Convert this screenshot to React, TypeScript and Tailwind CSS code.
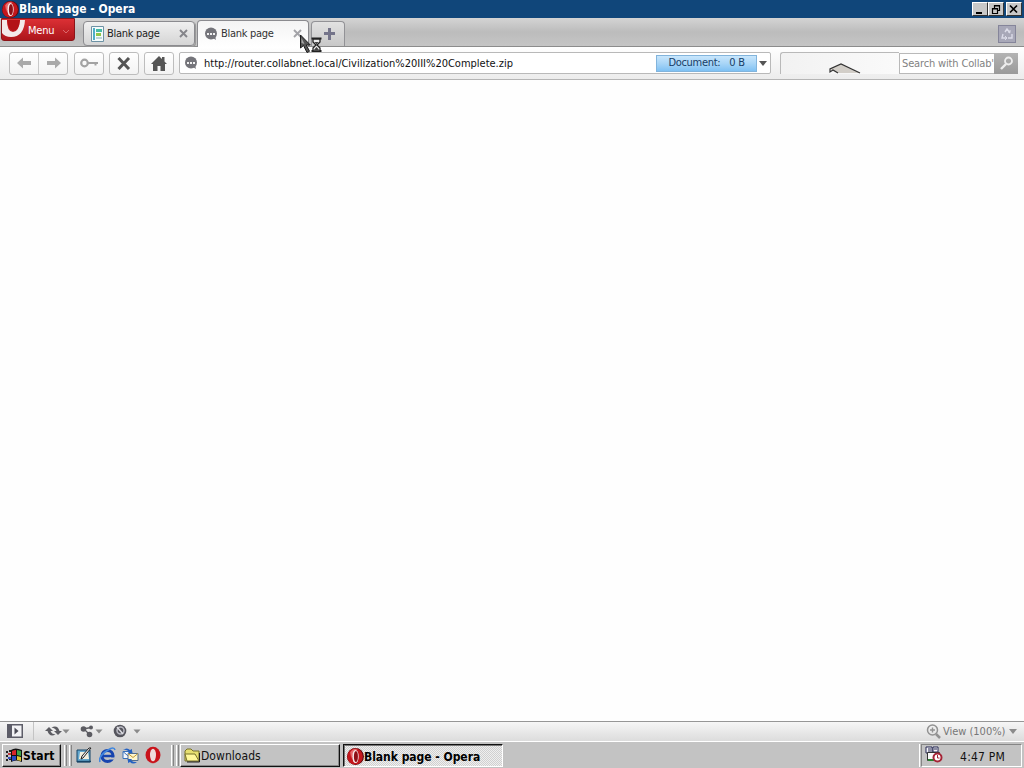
import type { ReactNode } from 'react';

function OperaLogo({ size = 16 }: { size?: number }) {
  return (
    <svg width={size} height={size} viewBox="0 0 16 16" className="shrink-0">
      <ellipse cx="8" cy="8" rx="8" ry="8" fill="#5c0b10" />
      <ellipse cx="7.6" cy="8" rx="7.3" ry="7.6" fill="#c4161c" />
      <path d="M3 4Q6 0 10 1Q5 3 4 10Z" fill="#e8686a" />
      <ellipse cx="8" cy="8" rx="3" ry="6.2" fill="#f6e8e8" />
      <ellipse cx="8.4" cy="8" rx="1.9" ry="5.2" fill="#8e0f16" />
    </svg>
  );
}

function BubbleIcon() {
  return (
    <svg width="14" height="14" viewBox="0 0 14 14" className="shrink-0">
      <circle cx="7" cy="6.6" r="6" fill="#74747a" />
      <path d="M9 11l3 2l-1-4z" fill="#74747a" />
      <path d="M3 6h2v2H3zM6 6h2v2H6zM9 6h2v2H9z" fill="#f2f2f2" />
    </svg>
  );
}

function CloseX({ color }: { color: string }) {
  return (
    <svg width="9" height="9" viewBox="0 0 9 9" className="shrink-0">
      <path d="M1 1l7 7M8 1l-7 7" stroke={color} strokeWidth="1.9" />
    </svg>
  );
}

function Caret({ color = '#77777b' }: { color?: string }) {
  return (
    <svg width="8" height="5" viewBox="0 0 8 5" className="shrink-0">
      <path d="M0 0h8L4 5z" fill={color} />
    </svg>
  );
}

function SmallCaret() {
  return (
    <svg width="8" height="5" viewBox="0 0 8 5" className="shrink-0">
      <path d="M.5 .5h7L4 4.500z" fill="#8a8a8a" />
    </svg>
  );
}

function WindowButton({ children }: { children: ReactNode }) {
  return (
    <button className="flex h-[14px] w-4 items-center justify-center border border-t-white border-r-[#333] border-b-[#333] border-l-white bg-[#c8c8c8]">
      {children}
    </button>
  );
}

function TitleBar() {
  return (
    <div className="flex h-[18px] items-center bg-[#10467a] pr-0.5 pl-0.5">
      <OperaLogo size={17} />
      <span className="flex-1 pt-px text-[12px] leading-[17px] font-bold tracking-[-0.03px] text-white">
        Blank page - Opera
      </span>
      <WindowButton>
        <svg width="12" height="10" viewBox="0 0 12 10">
          <path d="M2 8h6v2H2z" fill="#000" />
        </svg>
      </WindowButton>
      <WindowButton>
        <svg width="12" height="11" viewBox="0 0 12 11">
          <path d="M4.5 4V1.5h5v5H8M4 2h6M2.5 4.5h5v5h-5zM2 5h6" fill="none" stroke="#000" strokeWidth="1.2" />
        </svg>
      </WindowButton>
      <div className="w-0.5" />
      <WindowButton>
        <svg width="12" height="10" viewBox="0 0 12 10">
          <path d="M2 1.5l7 7M9 1.5l-7 7" stroke="#000" strokeWidth="1.7" />
        </svg>
      </WindowButton>
    </div>
  );
}

function TabBar() {
  return (
    <div className="relative flex h-[29px] items-start border-b border-[#8c8c8c] bg-linear-to-b from-[#d4d4d4] via-[#bcbcbc] to-[#c5c5c5]">
      <button className="ml-px flex h-[23px] w-[74px] items-start rounded-b-[3px] border border-[#8b1519] bg-linear-to-b from-[#dc3035] to-[#ad161b] pt-px text-[11px] text-white">
        <svg width="26" height="19" viewBox="0 0 26 19" className="shrink-0">
          <path d="M0 0H5Q5 12 11 12Q17 12 18 0H23Q22 17 9 17Q3 17 0 13Z" fill="#f3eaea" />
          <path d="M5 0h13Q17 11 11 11Q6 10 5 0Z" fill="#b31217" />
        </svg>
        <span className="mt-1 w-[34px] text-left leading-[14px] tracking-[-0.2px]">Menu</span>
        <svg width="8" height="5" viewBox="0 0 8 5" className="mt-[9px]">
          <path d="M1 1l3 3l3-3" fill="none" stroke="#d9686b" />
        </svg>
      </button>

      <div className="mt-[3px] ml-2 flex h-[25px] w-[112px] items-center rounded-[4px] border border-[#8b8b8f] bg-linear-to-b from-[#f0f0f0] to-[#d5d5d5] pr-1.5 pl-[7px] shadow-[1px_1px_0_#999]">
        <svg width="13" height="16" viewBox="0 0 13 16" className="shrink-0">
          <path d="M.5.5h12v15H.5z" fill="#f4fbfb" stroke="#6d92a5" />
          <path d="M2 2h2v12H2z" fill="#4daec8" />
          <path d="M5 3h6v3H5z" fill="#45bba7" />
          <path d="M5 7h5v3H5z" fill="#8fc64a" />
          <path d="M5 12h6" stroke="#82aebb" />
        </svg>
        <span className="ml-[3px] flex-1 pt-0.5 text-[11px] tracking-[-0.3px] text-[#222]">Blank page</span>
        <CloseX color="#85858a" />
      </div>

      <div className="mt-0.5 ml-0.5 flex h-[27px] w-[112px] items-center rounded-t-[4px] border border-b-0 border-[#8b8b8f] bg-linear-to-b from-[#f4f4f4] to-white pr-1.5 pb-px pl-1.5">
        <BubbleIcon />
        <span className="ml-[3px] flex-1 pt-0.5 text-[11px] tracking-[-0.3px] text-[#333]">Blank page</span>
        <CloseX color="#a3a3a8" />
      </div>

      <button className="mt-[3px] ml-0.5 flex h-[25px] w-[34px] items-center justify-center rounded-t-[4px] border border-b-0 border-[#929296] bg-linear-to-b from-[#e2e2e2] to-[#c8c8c8] pl-0.5">
        <svg width="13" height="13" viewBox="0 0 13 13">
          <path d="M5 0h3v4h4v3H8v5H5V7H1V4h4z" fill="#74748a" />
        </svg>
      </button>

      <div className="mt-[7px] mr-2 ml-auto flex size-[18px] items-center justify-center border border-[#85859a] bg-[#a8a8b8]">
        <svg width="14" height="14" viewBox="0 0 14 14" fill="none" stroke="#dcdce8">
          <path d="M5 5l2-3l3 4M3 7l-1 4h4M12 7v4H8" strokeWidth="1.4" />
          <path d="M8 5h2V3M5 9l2 2l-2 2" />
        </svg>
      </div>

      {/* Busy pointer, hovering over the close button */}
      <svg width="26" height="22" viewBox="0 0 26 22" className="absolute top-4 left-[299px] z-10">
        <path d="M1.5 1v13l3-2.5l3.5 7l2.5-1.2L7.3 11h4z" fill="#555" stroke="#1c1c1c" />
        <path d="M2.5 4v5l3 1z" fill="#aaa" />
        <path d="M12.5 4.500h10M12.500 17h10" stroke="#222" strokeWidth="2" />
        <path d="M14 5v3l3 3l-3 3v3h7v-3l-3-3l3-3V5z" fill="#eee" stroke="#222" strokeWidth="1.300" />
        <path d="M15.500 8h4l-2 2.500zM14.500 16.500l3-3.500l3 3.500z" fill="#444" />
      </svg>
    </div>
  );
}

function ToolButton({ children }: { children: ReactNode }) {
  return (
    <button className="flex h-[23px] w-[30px] items-center justify-center rounded-[3px] border border-[#bdbdbd] bg-linear-to-b from-white to-[#f3f3f3]">
      {children}
    </button>
  );
}

function AddressBar() {
  return (
    <div className="flex h-[33px] items-center border-b border-[#b5b5b5] bg-linear-to-b from-white to-[#ececec] pr-1.5 pl-[9px]">
      <div className="flex h-[23px] w-[59px] rounded-[3px] border border-[#bdbdbd] bg-linear-to-b from-white to-[#f3f3f3]">
        <button className="flex flex-1 items-center justify-center border-r border-[#c8c8c8]">
          <svg width="15" height="12" viewBox="0 0 15 12">
            <path d="M0 6l6-5.500v3.500h8v4H6v3.500z" fill="#aaa" />
          </svg>
        </button>
        <button className="flex flex-1 items-center justify-center">
          <svg width="15" height="12" viewBox="0 0 15 12">
            <path d="M15 6L9 .5v3.500H1v4h8v3.500z" fill="#aaa" />
          </svg>
        </button>
      </div>
      <div className="ml-1.5 flex gap-[5px]">
        <ToolButton>
          <svg width="18" height="10" viewBox="0 0 18 10" fill="none" stroke="#a3a3a3">
            <circle cx="4.5" cy="5" r="3.3" strokeWidth="2.2" />
            <path d="M8 5h10M15.5 5v2.5" strokeWidth="2" />
          </svg>
        </ToolButton>
        <ToolButton>
          <svg width="14" height="13" viewBox="0 0 14 13">
            <path d="M1.500 1l10.500 11M12 1l-10.500 11" stroke="#555" strokeWidth="3" />
          </svg>
        </ToolButton>
        <ToolButton>
          <svg width="16" height="15" viewBox="0 0 16 15">
            <path d="M8 0l3 3V1h2.5v4.5L16 8H14v7H9.5v-5h-3v5H2V8H0z" fill="#555" />
          </svg>
        </ToolButton>
      </div>

      <div className="ml-[5px] flex h-[22px] w-[592px] items-center rounded-[2px] border border-[#b9b9b9] bg-white pl-1">
        <BubbleIcon />
        <span className="ml-1.5 flex-1 pt-0.5 text-[11px] tracking-[-0.01px] whitespace-nowrap text-[#111]">
          http://router.collabnet.local/Civilization%20III%20Complete.zip
        </span>
        <div className="flex h-[17px] w-[101px] items-center justify-center gap-[9px] border border-[#82b4dc] bg-linear-to-b from-[#c8e6fc] via-[#a8d5f7] to-[#7fc1f3] pt-px text-[11px] tracking-[-0.3px] text-[#173d66]">
          <span>Document:</span>
          <span>0 B</span>
        </div>
        <div className="mr-[3px] ml-0.5">
          <Caret color="#555" />
        </div>
      </div>

      <div className="ml-[9px] flex h-[22px] w-[119px] items-end rounded-tl-[3px] border-t border-l border-[#b9b9b9] bg-linear-to-r from-[#f2f2f2] to-[#fafafa] pl-12">
        <svg width="32" height="11" viewBox="0 0 32 11">
          <path d="M1 6L12 1L31 10H8z" fill="#d2cec8" />
          <path d="M31 10L12 1L1 6v3l3-2l5 3" fill="none" stroke="#333" strokeWidth="1.2" />
        </svg>
      </div>
      <div className="flex h-[21px] flex-1 border border-[#b9b9b9] bg-white">
        <span className="w-[94px] overflow-hidden pl-[2px] text-[11px] leading-[20px] tracking-[-0.15px] whitespace-nowrap text-[#828282]">
          Search with Collab'
        </span>
        <button className="-m-px ml-0 flex flex-1 items-center justify-center bg-linear-to-b from-[#b3b3b3] to-[#9a9a9a]">
          <svg width="15" height="14" viewBox="0 0 15 14" fill="none" stroke="#ededed">
            <circle cx="9.5" cy="5" r="3.5" strokeWidth="1.8" />
            <path d="M7 8l-5 5" strokeWidth="2.4" />
          </svg>
        </button>
      </div>
    </div>
  );
}

function StatusBar() {
  return (
    <div className="flex h-5 items-center border-t border-[#969696] bg-linear-to-b from-[#f6f6f6] to-[#dcdcdc] pr-[7px] pb-px pl-[7px]">
      <svg width="16" height="14" viewBox="0 0 16 14">
        <path d="M.75.75h14.5v12.5H.75z" fill="#f3f3f5" stroke="#5d5d68" strokeWidth="1.5" />
        <path d="M1 1h4v12H1z" fill="#5d5d68" />
        <path d="M7.5 3.5v7l4-3.5z" fill="#4b4b55" />
      </svg>
      <div className="ml-2.5 h-full w-px bg-[#c4c4c4]" />
      <svg width="17" height="14" viewBox="0 0 17 14" className="ml-[11px]" fill="#5c5c62">
        <path d="M0 7l4-4l4 4H5.5q1 3 5 3.5q-6 3-8-3.5z" />
        <path d="M17 7l-4 4l-4-4h2.5q-1-3-5-3.5q6-3 8 3.5z" />
      </svg>
      <SmallCaret />
      <svg width="15" height="14" viewBox="0 0 15 14" className="ml-2.5" fill="#5c5c62">
        <circle cx="3.5" cy="5" r="2.8" />
        <circle cx="11" cy="3.5" r="2" />
        <circle cx="9.5" cy="10.5" r="2.8" />
        <path d="M3 5l8-1.5M4 5l5 5" stroke="#5c5c62" strokeWidth="1.3" />
      </svg>
      <SmallCaret />
      <svg width="14" height="14" viewBox="0 0 14 14" className="ml-2.5">
        <circle cx="7" cy="7" r="6.3" fill="#55555d" />
        <circle cx="7.5" cy="6.5" r="3.5" fill="none" stroke="#b9b9c2" strokeWidth="1.5" />
        <path d="M4 3l6 7" stroke="#dedee3" strokeWidth="1.5" />
      </svg>
      <div className="ml-1.5 flex">
        <SmallCaret />
      </div>

      <div className="ml-auto flex items-center">
        <svg width="15" height="15" viewBox="0 0 15 15" fill="none" stroke="#929292">
          <circle cx="6.5" cy="6" r="5" strokeWidth="1.5" />
          <path d="M4 6h5M6.5 3.5v5" strokeWidth="1.4" />
          <path d="M10 10l4 4" strokeWidth="2.5" />
        </svg>
        <span className="mr-[3px] ml-0.5 w-[63px] pt-0.5 text-[11px] leading-4 tracking-[-0.02px] whitespace-nowrap text-[#777]">
          View (100%)
        </span>
        <Caret color="#8b8b8b" />
      </div>
    </div>
  );
}

function Grip() {
  return <div className="h-[21px] w-[3px] border-r border-l border-r-[#858585] border-l-white" />;
}

function QuickLaunch() {
  return (
    <div className="ml-[4px] flex items-center gap-1.5">
      <svg width="17" height="17" viewBox="0 0 17 17">
        <path d="M1 3h13v12H1z" fill="#64a8cf" stroke="#174467" />
        <path d="M4 5h8l1 7H3z" fill="#f3f0e0" />
        <path d="M15 1L7 11l-2 1l1-3l7-8z" fill="#eee" stroke="#222" />
        <path d="M1 14.500h14" stroke="#174467" strokeWidth="1.500" />
      </svg>
      <svg width="17" height="17" viewBox="0 0 17 17">
        <circle cx="8.5" cy="9" r="5.5" fill="none" stroke="#1744ae" strokeWidth="3.2" />
        <path d="M4 9h10" stroke="#1744ae" strokeWidth="2.5" />
        <path d="M11 10.5h5l-1 2h-4z" fill="#c4c4c4" />
        <path d="M1 15Q-1 9 9 3Q15-1 16 3" fill="none" stroke="#4187df" strokeWidth="1.6" />
      </svg>
      <svg width="17" height="17" viewBox="0 0 17 17">
        <path d="M1 4.5h9v7H1z" fill="#f5f8fc" stroke="#3972ba" />
        <path d="M1 4.500l4.500 4L10 4.500" fill="none" stroke="#3972ba" />
        <path d="M6 6.500h10v7H6z" fill="#fff6ce" stroke="#526d91" />
        <path d="M6 6.500l5 4l5-4" fill="none" stroke="#c59a32" />
        <path d="M1 3q4-3 7 0l2-1v4H6l1-1.500Q4 2 1 3zM15 15q-4 3-7 0l-2 1v-4h4l-1 1.500q3 2 6 1.500z" fill="#2562c3" />
      </svg>
      <svg width="16" height="18" viewBox="0 0 16 18">
        <ellipse cx="8" cy="9" rx="7.5" ry="8.3" fill="#c9131b" />
        <ellipse cx="8" cy="9" rx="3" ry="6.3" fill="#eedcdc" />
      </svg>
    </div>
  );
}

function TaskBar() {
  return (
    <div className="flex h-[27px] items-center border-t border-white bg-[#c3c3c3] pr-0.5 pl-0.5">
      <button className="flex h-[23px] w-[59px] items-center border border-t-white border-r-[#111] border-b-[#111] border-l-white bg-[#c6c6c6] pl-[3px] shadow-[inset_-1px_-1px_0_#888]">
        <svg width="17" height="15" viewBox="0 0 17 15" className="shrink-0">
          <path d="M0 3h2v2H0zM0 7h2v2H0zM0 11h2v2H0zM3 2h2v2H3zM3 10h2v2H3z" fill="#222" />
          <path d="M2 5h3v2H2z" fill="#c43a3e" />
          <path d="M2 9h3v2H2z" fill="#3a50c4" />
          <path d="M5 2Q9-1 16 2v12Q10 11 5 14z" fill="#111" />
          <path d="M6 3q2-1 4-1v5H6z" fill="#d8252a" />
          <path d="M11 2l4 1v5l-4-1z" fill="#3ba34a" />
          <path d="M6 8h4v4l-4 1z" fill="#294ac3" />
          <path d="M11 8l4 1v4l-4-1z" fill="#e0c735" />
        </svg>
        <span className="pt-0.5 text-[12px] font-bold tracking-[0.2px] text-black">Start</span>
      </button>
      <div className="ml-[3px] flex gap-0.5">
        <Grip />
        <Grip />
      </div>
      <QuickLaunch />
      <div className="ml-[10px] flex gap-0.5">
        <Grip />
        <Grip />
      </div>

      <button className="ml-[1px] flex h-[23px] w-40 items-center border border-t-white border-r-[#111] border-b-[#111] border-l-white bg-[#c3c3c3] pl-[3px] shadow-[inset_-1px_-1px_0_#888]">
        <svg width="17" height="15" viewBox="0 0 17 15" className="shrink-0">
          <path d="M1 13V3l2-2h4l2 2h6v10z" fill="#e6df70" stroke="#77702a" />
          <path d="M3 13l-2-7h10l4 7z" fill="#fff89a" stroke="#77702a" />
          <path d="M15.5 5v9H3" fill="none" stroke="#222" />
        </svg>
        <span className="pt-0.5 text-[12px] tracking-[0.05px] text-[#111]">Downloads</span>
      </button>
      <button className="ml-[3px] flex h-[23px] w-40 items-center border border-t-[#111] border-r-white border-b-white border-l-[#111] bg-[repeating-conic-gradient(#d0d0d0_0_25%,#efefef_0_50%)] bg-size-[2px_2px] pt-0.5 pl-[3px] shadow-[inset_1px_1px_0_#777]">
        <OperaLogo size={17} />
        <span className="pt-0.5 text-[12px] font-bold tracking-[-0.03px] text-black">Blank page - Opera</span>
      </button>

      <div className="ml-auto h-[23px] w-px bg-white" />
      <div className="ml-[1px] flex h-[23px] w-[101px] items-center border border-t-[#858585] border-r-white border-b-white border-l-[#858585] pl-[3px]">
        <svg width="18" height="17" viewBox="0 0 18 17" className="mb-0.5">
          <path d="M1 1h6v6H1zM8 1h5v5H8z" fill="#f4f4f8" stroke="#252653" />
          <path d="M3 3h3M9 3h3M3 5h3" stroke="#252653" />
          <path d="M2.5 6.5h12v8h-12z" fill="#fafafa" stroke="#333" />
          <path d="M3 14h8" stroke="#27822e" strokeWidth="2" />
          <circle cx="12.5" cy="11.5" r="4" fill="#fff" stroke="#a52436" strokeWidth="2" />
          <path d="M12.5 9v3h2" fill="none" stroke="#a52436" />
        </svg>
        <span className="ml-auto pt-1 pr-4 text-[12px] leading-4 tracking-[0.2px] text-[#111]">4:47 PM</span>
      </div>
    </div>
  );
}

export default function App() {
  return (
    <div className="flex h-[768px] w-[1024px] flex-col overflow-hidden bg-white font-['DejaVu_Sans_Condensed','DejaVu_Sans',sans-serif] select-none">
      <TitleBar />
      <TabBar />
      <AddressBar />
      <main className="flex-1 bg-[#fefefe]" />
      <StatusBar />
      <TaskBar />
    </div>
  );
}
